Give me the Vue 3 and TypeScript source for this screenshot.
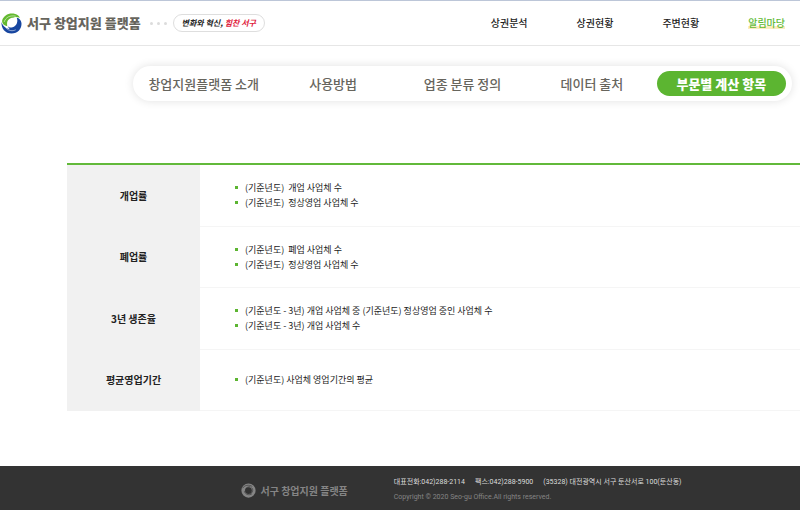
<script setup lang="ts">
interface Criterion {
  name: string
  items: string[]
}

const menu: string[] = ['상권분석', '상권현황', '주변현황', '알림마당']
const activeMenu = '알림마당'

const tabs: string[] = ['창업지원플랫폼 소개', '사용방법', '업종 분류 정의', '데이터 출처', '부문별 계산 항목']
const activeTab = '부문별 계산 항목'

const criteria: Criterion[] = [
  { name: '개업률', items: ['(기준년도)\u00a0 개업 사업체 수', '(기준년도)\u00a0 정상영업 사업체 수'] },
  { name: '폐업률', items: ['(기준년도)\u00a0 폐업 사업체 수', '(기준년도)\u00a0 정상영업 사업체 수'] },
  {
    name: '3년 생존율',
    items: ['(기준년도 - 3년) 개업 사업체 중 (기준년도) 정상영업 중인 사업체 수', '(기준년도 - 3년) 개업 사업체 수'],
  },
  { name: '평균영업기간', items: ['(기준년도) 사업체 영업기간의 평균'] },
]
</script>

<template>
  <div class="page">
    <header class="header">
      <a class="brand" href="#">
        <svg class="emblem" viewBox="0 0 40 40" aria-hidden="true">
          <path fill="#1746a0" d="M1 17C0 29 8 39 20 39c12 0 20-9 19-20-1-6-4-9-9-10 3 7 0 16-8 18-4 1-7 0-9-2 1 3 3 5 5 6C10 30 3 25 1 17Z" />
          <path fill="#63b92f" d="M2 15C5 4 16-1 27 2c4 1 7 3 9 7-6-2-10-2-13 0-8 0-13 6-11 16C6 24 2 20 2 15Z" />
          <path fill="none" stroke="#fff" stroke-width="1" d="M6 17C9 8 17 4 28 6M10 29c5 5 12 6 18 3" />
        </svg>
        <span class="brand-name">서구 창업지원 플랫폼</span>
      </a>
      <span class="dots" aria-hidden="true"><i></i><i></i><i></i></span>
      <span class="slogan">변화와 혁신, <em>힘찬 서구</em></span>
      <nav class="menu">
        <a v-for="item in menu" :key="item" href="#" :class="{ active: item === activeMenu }">{{ item }}</a>
      </nav>
    </header>

    <main class="main">
      <nav class="tabs">
        <a v-for="tab in tabs" :key="tab" href="#" :class="{ active: tab === activeTab }">{{ tab }}</a>
      </nav>
      <table class="criteria">
        <tbody>
          <tr v-for="row in criteria" :key="row.name">
            <th scope="row">{{ row.name }}</th>
            <td>
              <ul>
                <li v-for="item in row.items" :key="item">{{ item }}</li>
              </ul>
            </td>
          </tr>
        </tbody>
      </table>
    </main>

    <footer class="footer">
      <div class="footer-brand">
        <svg class="footer-emblem" viewBox="0 0 40 40" aria-hidden="true">
          <circle cx="20" cy="20" r="14" fill="none" stroke="#858585" stroke-width="10" />
          <path fill="none" stroke="#333" stroke-width="1.6" d="M4 14C10 5 21 4 30 9M9 22c2 8 11 12 20 7M13 25c-4-8 2-16 12-15M28 12c6 5 3 15-4 17" />
        </svg>
        <span>서구 창업지원 플랫폼</span>
      </div>
      <div class="info">
        <address>
          <span>대표전화:042)288-2114</span>
          <span>팩스:042)288-5900</span>
          <span>(35328) 대전광역시 서구 둔산서로 100(둔산동)</span>
        </address>
        <p>Copyright © 2020 Seo-gu Office.All rights reserved.</p>
      </div>
    </footer>
  </div>
</template>

<style>
body {
  margin: 0;
  background: #fff;
  overflow-x: hidden;
}
</style>

<style scoped>
.page {
  display: flex;
  flex-direction: column;
  min-height: 100vh;
  font-family: "Noto Sans CJK KR", "Noto Sans", sans-serif;
  color: #222;
}
a {
  color: inherit;
  text-decoration: none;
  white-space: nowrap;
}
.header {
  display: flex;
  align-items: center;
  box-sizing: border-box;
  height: 46px;
  padding: 0 15px 0 1px;
  border-top: 1px solid #bcc6d8;
  border-bottom: 1px solid #e6e6e6;
}
.brand {
  display: flex;
  align-items: center;
  gap: 5px;
}
.emblem {
  width: 21px;
  height: 21px;
}
.brand-name {
  font-size: 13px;
  line-height: 20px;
  font-weight: 900;
  color: #67655d;
}
.dots {
  display: flex;
  gap: 4px;
  margin: 0 6px 0 9px;
}
.dots i {
  width: 3px;
  height: 3px;
  border-radius: 50%;
  background: #dcdcdc;
}
.slogan {
  box-sizing: border-box;
  height: 18px;
  padding: 0 8px;
  border: 1px solid #dedede;
  border-radius: 9px;
  font-size: 8px;
  line-height: 15px;
  font-weight: 700;
  font-style: italic;
  white-space: nowrap;
}
.slogan em {
  color: #e0213c;
}
.menu {
  display: flex;
  gap: 49px;
  margin-left: auto;
  font-size: 10px;
  line-height: 12px;
  font-weight: 500;
}
.menu .active {
  color: #62bb37;
  background: linear-gradient(transparent 75%, #fbecc0 75%);
}
.main {
  flex: 1;
  padding: 20px 0 55px 67px;
}
.tabs {
  display: grid;
  grid-template-columns: repeat(5, 1fr);
  margin: 0 8px 0 66px;
  padding: 5px 6px;
  border-radius: 18px;
  box-shadow: 0 0 10px rgba(0, 0, 0, 0.12);
  font-size: 13px;
  line-height: 25px;
  font-weight: 500;
  text-align: center;
  color: #67655d;
}
.tabs .active {
  border-radius: 13px;
  background: #5cb531;
  color: #fff;
  font-weight: 900;
}
.criteria {
  width: 100%;
  height: 248px;
  margin-top: 62px;
  border-collapse: separate;
  border-spacing: 0;
  border-top: 2px solid #62b93a;
}
.criteria th {
  width: 133px;
  padding: 0 0 1px;
  background: #f1f1f1;
  font-size: 10px;
  line-height: 15px;
  font-weight: 700;
}
.criteria td {
  height: 60px;
  padding: 0 0 0 35px;
  border-bottom: 1px solid #f5f5f5;
}
.criteria ul {
  margin: 0;
  padding: 0;
  list-style: none;
}
.criteria li {
  display: flex;
  align-items: center;
  gap: 7px;
  font-size: 9px;
  line-height: 15px;
}
.criteria li::before {
  content: "";
  width: 3px;
  height: 3px;
  background: #5cb531;
}
.footer {
  display: flex;
  align-items: center;
  justify-content: center;
  gap: 46px;
  padding: 9px 0 5px 123px;
  background: #333;
}
.footer-brand {
  display: flex;
  align-items: center;
  gap: 4px;
  font-size: 10px;
  line-height: 15px;
  font-weight: 700;
  color: #858585;
  white-space: nowrap;
}
.footer-emblem {
  width: 15px;
  height: 15px;
}
.info {
  font-size: 7px;
  line-height: 15px;
  font-family: Roboto, "Noto Sans CJK KR", sans-serif;
}
.info address {
  display: flex;
  gap: 10px;
  font-style: normal;
  color: #ddd;
  white-space: nowrap;
}
.info p {
  margin: 0;
  color: #858585;
}
</style>
